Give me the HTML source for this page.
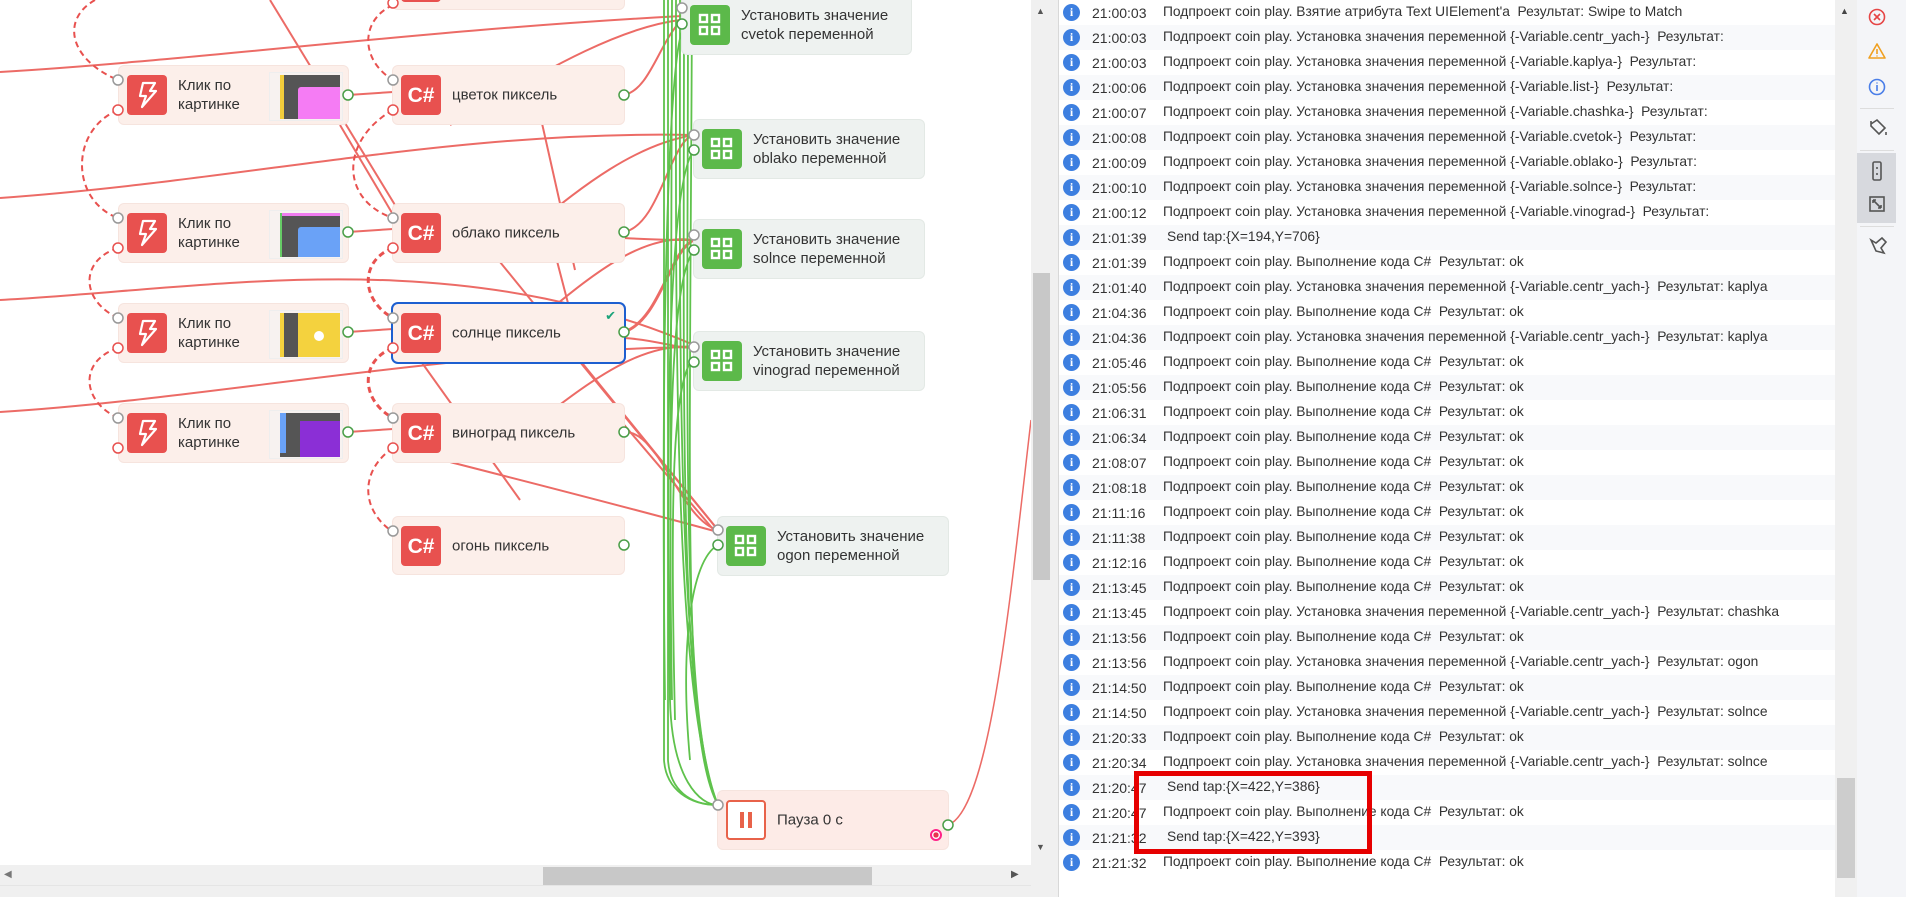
<!DOCTYPE html>
<html><head><meta charset="utf-8">
<style>
*{margin:0;padding:0;box-sizing:border-box}
body{width:1906px;height:897px;overflow:hidden;background:#fff;font-family:"Liberation Sans","DejaVu Sans",sans-serif;position:relative}
.canvas{position:absolute;left:0;top:0;width:1031px;height:865px;background:#fff;overflow:hidden}
.node{position:absolute;border-radius:5px;font-size:15px;color:#333;line-height:19px}
.red{background:#fcefea;box-shadow:0 0 0 1px #f6e4de}
.grn{background:#eef2f0;box-shadow:0 0 0 1px #e3e9e5}
.ic{position:absolute;left:8px;top:9px;width:40px;height:40px;border-radius:4px;background:#e8514f;color:#fff;font-weight:bold;font-size:21px;display:flex;align-items:center;justify-content:center}
.gic{background:#5cb94a}
.lbl{position:absolute;left:59px;top:50%;transform:translateY(-50%)}
.thumb{position:absolute;left:150px;top:6px;width:74px;height:49px;background:#f7f2f0;border:1px solid #eee}
.log{position:absolute;left:1058px;top:0;width:777px;height:897px;background:#fff;border-left:1px solid #d8d8d8;overflow:hidden}
.row{position:absolute;left:0;width:777px;height:25px;font-size:13.8px;color:#333;white-space:nowrap}
.row:nth-child(odd){background:#fff}.row:nth-child(even){background:#f8f9fb}
.row .i{position:absolute;left:4px;top:4px;width:17px;height:17px;border-radius:50%;background:#3d7fe0;color:#fff;font-size:12px;font-weight:bold;text-align:center;line-height:17px;font-family:"Liberation Serif",serif}
.row .t{position:absolute;left:33px;top:5px;font-size:14px}
.row .m{position:absolute;left:104px;top:4px}
.row .s{left:108px}
</style></head><body>
<div class="canvas">
<svg width="1031" height="865" style="position:absolute;left:0;top:0" fill="none">
<g stroke="#ec6b66" stroke-width="2">
<path d="M0 72 C200 60 420 30 682 16"/>
<path d="M0 198 C250 180 450 130 694 135"/>
<path d="M0 300 C200 290 450 240 694 345"/>
<path d="M0 412 C200 400 450 350 694 347"/>
<path d="M270 0 L395 205"/>
<path d="M340 125 L395 218"/>
<path d="M530 70 L575 270"/>
<path d="M545 215 L575 330"/>
<path d="M450 125 C500 100 600 30 680 20"/>
<path d="M480 262 C520 250 600 150 694 135"/>
<path d="M480 362 C550 320 620 230 694 240"/>
<path d="M480 462 C550 420 620 340 694 347"/>
<path d="M500 262 L718 530"/>
<path d="M580 362 L718 530"/>
<path d="M620 420 L718 535"/>
<path d="M420 360 L520 500"/>
<path d="M450 462 C520 480 600 500 718 532"/>
<path d="M624 95 C650 90 660 40 682 20"/>
<path d="M624 232 C660 225 670 140 694 135"/>
<path d="M624 238 C660 240 680 240 694 240"/>
<path d="M624 332 C660 320 670 250 694 240" stroke-width="3"/>
<path d="M624 338 C660 340 680 350 694 347"/>
<path d="M624 432 C660 430 680 520 718 530"/>
<path d="M348 95 L393 92"/><path d="M348 232 L393 229"/><path d="M348 332 L393 329"/><path d="M348 432 L393 429"/>
<path d="M948 825 C990 810 1010 600 1031 420" stroke-width="1.5"/>
</g>
<g stroke="#e8514f" stroke-width="2" stroke-dasharray="6 4">
<path d="M118 110 C70 130 70 200 118 218"/>
<path d="M118 248 C80 260 80 300 118 318"/>
<path d="M118 348 C80 360 80 400 118 418"/>
<path d="M95 0 C60 20 70 60 118 80"/>
<path d="M393 5 C360 20 360 60 393 80"/>
<path d="M393 110 C340 140 340 200 393 218"/>
<path d="M393 248 C360 260 360 300 393 318" stroke-width="3"/>
<path d="M393 348 C360 360 360 400 393 418" stroke-width="3"/>
<path d="M393 448 C360 470 360 510 393 532"/>
</g>
<g stroke="#5fc24c" stroke-width="1.8">
<path d="M664 0 L664 760 C666 790 690 805 718 805"/>
<path d="M668 0 L668 760 C670 790 690 805 718 805"/>
<path d="M672 0 L670 700 C672 780 700 805 718 805"/>
<path d="M676 0 C676 300 672 700 718 805"/>
<path d="M680 0 C680 300 675 700 718 805"/>
<path d="M684 0 C684 400 678 720 718 805"/>
<path d="M688 0 C688 400 680 720 718 805"/>
<path d="M692 0 C690 500 682 740 718 805"/>
<path d="M682 32 C670 60 660 300 665 700"/>
<path d="M694 150 C670 180 665 400 670 700"/>
<path d="M694 250 C670 280 668 450 672 700"/>
<path d="M694 357 C672 380 670 500 675 720"/>
<path d="M718 545 C690 560 680 650 690 760"/>
</g>
</svg>

<div class="node red" style="left:393px;top:-48px;width:231px;height:57px"><div class="ic" style="top:30px;height:20px"></div></div>

<div class="node red" style="left:119px;top:66px;width:229px;height:58px"><div class="ic"><svg width="24" height="28" viewBox="0 0 24 28"><path d="M8 2h12l-5 8h6L7 26l4-11H5z" stroke="#fff" stroke-width="2.2" fill="none" stroke-linejoin="round"/></svg></div><div class="lbl">Клик по<br>картинке</div><div class="thumb"><div style="position:absolute;left:10px;top:2px;width:60px;height:44px;background:#555"></div><div style="position:absolute;left:10px;top:2px;width:4px;height:44px;background:#f2cd3b"></div><div style="position:absolute;left:28px;top:14px;width:42px;height:32px;background:#f57cf4;border-radius:3px 0 0 0"></div></div></div>
<div class="node red" style="left:119px;top:204px;width:229px;height:58px"><div class="ic"><svg width="24" height="28" viewBox="0 0 24 28"><path d="M8 2h12l-5 8h6L7 26l4-11H5z" stroke="#fff" stroke-width="2.2" fill="none" stroke-linejoin="round"/></svg></div><div class="lbl">Клик по<br>картинке</div><div class="thumb"><div style="position:absolute;left:10px;top:2px;width:60px;height:44px;background:#555"></div><div style="position:absolute;left:10px;top:2px;width:60px;height:3px;background:#f07cf0"></div><div style="position:absolute;left:10px;top:2px;width:2px;height:44px;background:#6c6"></div><div style="position:absolute;left:28px;top:16px;width:42px;height:30px;background:#6aa2f7;border-radius:3px 0 0 0"></div></div></div>
<div class="node red" style="left:119px;top:304px;width:229px;height:58px"><div class="ic"><svg width="24" height="28" viewBox="0 0 24 28"><path d="M8 2h12l-5 8h6L7 26l4-11H5z" stroke="#fff" stroke-width="2.2" fill="none" stroke-linejoin="round"/></svg></div><div class="lbl">Клик по<br>картинке</div><div class="thumb"><div style="position:absolute;left:10px;top:2px;width:60px;height:44px;background:#f4d23e"></div><div style="position:absolute;left:14px;top:2px;width:14px;height:44px;background:#555"></div><div style="position:absolute;left:44px;top:20px;width:10px;height:10px;background:#fff;border-radius:50%"></div></div></div>
<div class="node red" style="left:119px;top:404px;width:229px;height:58px"><div class="ic"><svg width="24" height="28" viewBox="0 0 24 28"><path d="M8 2h12l-5 8h6L7 26l4-11H5z" stroke="#fff" stroke-width="2.2" fill="none" stroke-linejoin="round"/></svg></div><div class="lbl">Клик по<br>картинке</div><div class="thumb"><div style="position:absolute;left:10px;top:2px;width:60px;height:44px;background:#555"></div><div style="position:absolute;left:10px;top:2px;width:6px;height:40px;background:#6aa2f7"></div><div style="position:absolute;left:30px;top:10px;width:40px;height:36px;background:#8b2fd6"></div></div></div>

<div class="node red" style="left:393px;top:66px;width:231px;height:58px"><div class="ic">C#</div><div class="lbl">цветок пиксель</div></div>
<div class="node red" style="left:393px;top:204px;width:231px;height:58px"><div class="ic">C#</div><div class="lbl">облако пиксель</div></div>
<div class="node red" style="left:393px;top:304px;width:231px;height:58px;box-shadow:0 0 0 2px #1d5fd0;background:#fcefea"><div class="ic">C#</div><div class="lbl">солнце пиксель</div><div style="position:absolute;right:8px;top:2px;color:#1aa37a;font-size:13px;font-weight:bold">✔</div></div>
<div class="node red" style="left:393px;top:404px;width:231px;height:58px"><div class="ic">C#</div><div class="lbl">виноград пиксель</div></div>
<div class="node red" style="left:393px;top:517px;width:231px;height:57px"><div class="ic">C#</div><div class="lbl">огонь пиксель</div></div>

<div class="node grn" style="left:682px;top:-4px;width:229px;height:58px"><div class="ic gic"><svg width="24" height="24"><g stroke="#fff" stroke-width="2.4" fill="none"><rect x="2" y="2" width="7" height="7"/><rect x="14" y="2" width="7" height="7"/><rect x="2" y="14" width="7" height="7"/><rect x="14" y="14" width="7" height="7"/></g></svg></div><div class="lbl">Установить значение<br>cvetok переменной</div></div>
<div class="node grn" style="left:694px;top:120px;width:230px;height:58px"><div class="ic gic"><svg width="24" height="24"><g stroke="#fff" stroke-width="2.4" fill="none"><rect x="2" y="2" width="7" height="7"/><rect x="14" y="2" width="7" height="7"/><rect x="2" y="14" width="7" height="7"/><rect x="14" y="14" width="7" height="7"/></g></svg></div><div class="lbl">Установить значение<br>oblako переменной</div></div>
<div class="node grn" style="left:694px;top:220px;width:230px;height:58px"><div class="ic gic"><svg width="24" height="24"><g stroke="#fff" stroke-width="2.4" fill="none"><rect x="2" y="2" width="7" height="7"/><rect x="14" y="2" width="7" height="7"/><rect x="2" y="14" width="7" height="7"/><rect x="14" y="14" width="7" height="7"/></g></svg></div><div class="lbl">Установить значение<br>solnce переменной</div></div>
<div class="node grn" style="left:694px;top:332px;width:230px;height:58px"><div class="ic gic"><svg width="24" height="24"><g stroke="#fff" stroke-width="2.4" fill="none"><rect x="2" y="2" width="7" height="7"/><rect x="14" y="2" width="7" height="7"/><rect x="2" y="14" width="7" height="7"/><rect x="14" y="14" width="7" height="7"/></g></svg></div><div class="lbl">Установить значение<br>vinograd переменной</div></div>
<div class="node grn" style="left:718px;top:517px;width:230px;height:58px"><div class="ic gic"><svg width="24" height="24"><g stroke="#fff" stroke-width="2.4" fill="none"><rect x="2" y="2" width="7" height="7"/><rect x="14" y="2" width="7" height="7"/><rect x="2" y="14" width="7" height="7"/><rect x="14" y="14" width="7" height="7"/></g></svg></div><div class="lbl">Установить значение<br>ogon переменной</div></div>
<div class="node red" style="left:718px;top:791px;width:230px;height:58px;background:#fdebe7"><div class="ic" style="background:#fff;border:2.5px solid #e8624a"><div style="width:4px;height:16px;background:#e8624a;margin-right:4px"></div><div style="width:4px;height:16px;background:#e8624a"></div></div><div class="lbl">Пауза 0 с</div><div style="position:absolute;right:6px;bottom:8px;width:12px;height:12px;border-radius:50%;border:2px solid #f28;background:radial-gradient(#e83350 45%,#fff 50%)"></div></div>

<svg width="1031" height="865" style="position:absolute;left:0;top:0" fill="#fff" stroke-width="1.5">
<g stroke="#999"><circle cx="118" cy="80" r="5"/><circle cx="118" cy="218" r="5"/><circle cx="118" cy="318" r="5"/><circle cx="118" cy="418" r="5"/>
<circle cx="393" cy="80" r="5"/><circle cx="393" cy="218" r="5"/><circle cx="393" cy="318" r="5"/><circle cx="393" cy="418" r="5"/><circle cx="393" cy="531" r="5"/>
<circle cx="682" cy="8" r="5"/><circle cx="694" cy="135" r="5"/><circle cx="694" cy="235" r="5"/><circle cx="694" cy="347" r="5"/><circle cx="718" cy="530" r="5"/><circle cx="718" cy="805" r="5"/></g>
<g stroke="#e8514f"><circle cx="118" cy="110" r="5"/><circle cx="118" cy="248" r="5"/><circle cx="118" cy="348" r="5"/><circle cx="118" cy="448" r="5"/>
<circle cx="393" cy="3" r="5"/><circle cx="393" cy="110" r="5"/><circle cx="393" cy="248" r="5"/><circle cx="393" cy="348" r="5"/><circle cx="393" cy="448" r="5"/></g>
<g stroke="#4a9e48"><circle cx="348" cy="95" r="5"/><circle cx="348" cy="232" r="5"/><circle cx="348" cy="332" r="5"/><circle cx="348" cy="432" r="5"/>
<circle cx="624" cy="95" r="5"/><circle cx="624" cy="232" r="5"/><circle cx="624" cy="332" r="5"/><circle cx="624" cy="432" r="5"/><circle cx="624" cy="545" r="5"/>
<circle cx="682" cy="24" r="5"/><circle cx="694" cy="150" r="5"/><circle cx="694" cy="250" r="5"/><circle cx="694" cy="362" r="5"/><circle cx="718" cy="545" r="5"/><circle cx="948" cy="825" r="5"/></g>
</svg>
</div>
<div style="position:absolute;left:1031px;top:0;width:21px;height:865px;background:#f0f0f0"><div style="position:absolute;left:2px;top:273px;width:17px;height:307px;background:#c8c8c8"></div><div style="position:absolute;left:5px;top:842px;font-size:9px;color:#555">▼</div><div style="position:absolute;left:5px;top:6px;font-size:9px;color:#555">▲</div></div>
<div style="position:absolute;left:0;top:865px;width:1052px;height:32px;background:#f0f0f0"><div style="position:absolute;left:543px;top:2px;width:329px;height:19px;background:#c8c8c8"></div><div style="position:absolute;left:0;top:0;width:1031px;height:21px;border-bottom:1px solid #e5e5e5"></div><div style="position:absolute;left:4px;top:4px;font-size:10px;color:#777">◀</div><div style="position:absolute;left:1011px;top:4px;font-size:10px;color:#555">▶</div></div>
<div style="position:absolute;left:1052px;top:0;width:6px;height:897px;background:#f0f0f0"></div>

<div class="log">
<div class="row" style="top:0"><span class="i">i</span><span class="t">21:00:03</span><span class="m">Подпроект coin play. Взятие атрибута Text UIElement'a &nbsp;Результат: Swipe to Match</span></div>
<div class="row" style="top:25px"><span class="i">i</span><span class="t">21:00:03</span><span class="m">Подпроект coin play. Установка значения переменной {-Variable.centr_yach-} &nbsp;Результат:</span></div>
<div class="row" style="top:50px"><span class="i">i</span><span class="t">21:00:03</span><span class="m">Подпроект coin play. Установка значения переменной {-Variable.kaplya-} &nbsp;Результат:</span></div>
<div class="row" style="top:75px"><span class="i">i</span><span class="t">21:00:06</span><span class="m">Подпроект coin play. Установка значения переменной {-Variable.list-} &nbsp;Результат:</span></div>
<div class="row" style="top:100px"><span class="i">i</span><span class="t">21:00:07</span><span class="m">Подпроект coin play. Установка значения переменной {-Variable.chashka-} &nbsp;Результат:</span></div>
<div class="row" style="top:125px"><span class="i">i</span><span class="t">21:00:08</span><span class="m">Подпроект coin play. Установка значения переменной {-Variable.cvetok-} &nbsp;Результат:</span></div>
<div class="row" style="top:150px"><span class="i">i</span><span class="t">21:00:09</span><span class="m">Подпроект coin play. Установка значения переменной {-Variable.oblako-} &nbsp;Результат:</span></div>
<div class="row" style="top:175px"><span class="i">i</span><span class="t">21:00:10</span><span class="m">Подпроект coin play. Установка значения переменной {-Variable.solnce-} &nbsp;Результат:</span></div>
<div class="row" style="top:200px"><span class="i">i</span><span class="t">21:00:12</span><span class="m">Подпроект coin play. Установка значения переменной {-Variable.vinograd-} &nbsp;Результат:</span></div>
<div class="row" style="top:225px"><span class="i">i</span><span class="t">21:01:39</span><span class="m s">Send tap:{X=194,Y=706}</span></div>
<div class="row" style="top:250px"><span class="i">i</span><span class="t">21:01:39</span><span class="m">Подпроект coin play. Выполнение кода C# &nbsp;Результат: ok</span></div>
<div class="row" style="top:275px"><span class="i">i</span><span class="t">21:01:40</span><span class="m">Подпроект coin play. Установка значения переменной {-Variable.centr_yach-} &nbsp;Результат: kaplya</span></div>
<div class="row" style="top:300px"><span class="i">i</span><span class="t">21:04:36</span><span class="m">Подпроект coin play. Выполнение кода C# &nbsp;Результат: ok</span></div>
<div class="row" style="top:325px"><span class="i">i</span><span class="t">21:04:36</span><span class="m">Подпроект coin play. Установка значения переменной {-Variable.centr_yach-} &nbsp;Результат: kaplya</span></div>
<div class="row" style="top:350px"><span class="i">i</span><span class="t">21:05:46</span><span class="m">Подпроект coin play. Выполнение кода C# &nbsp;Результат: ok</span></div>
<div class="row" style="top:375px"><span class="i">i</span><span class="t">21:05:56</span><span class="m">Подпроект coin play. Выполнение кода C# &nbsp;Результат: ok</span></div>
<div class="row" style="top:400px"><span class="i">i</span><span class="t">21:06:31</span><span class="m">Подпроект coin play. Выполнение кода C# &nbsp;Результат: ok</span></div>
<div class="row" style="top:425px"><span class="i">i</span><span class="t">21:06:34</span><span class="m">Подпроект coin play. Выполнение кода C# &nbsp;Результат: ok</span></div>
<div class="row" style="top:450px"><span class="i">i</span><span class="t">21:08:07</span><span class="m">Подпроект coin play. Выполнение кода C# &nbsp;Результат: ok</span></div>
<div class="row" style="top:475px"><span class="i">i</span><span class="t">21:08:18</span><span class="m">Подпроект coin play. Выполнение кода C# &nbsp;Результат: ok</span></div>
<div class="row" style="top:500px"><span class="i">i</span><span class="t">21:11:16</span><span class="m">Подпроект coin play. Выполнение кода C# &nbsp;Результат: ok</span></div>
<div class="row" style="top:525px"><span class="i">i</span><span class="t">21:11:38</span><span class="m">Подпроект coin play. Выполнение кода C# &nbsp;Результат: ok</span></div>
<div class="row" style="top:550px"><span class="i">i</span><span class="t">21:12:16</span><span class="m">Подпроект coin play. Выполнение кода C# &nbsp;Результат: ok</span></div>
<div class="row" style="top:575px"><span class="i">i</span><span class="t">21:13:45</span><span class="m">Подпроект coin play. Выполнение кода C# &nbsp;Результат: ok</span></div>
<div class="row" style="top:600px"><span class="i">i</span><span class="t">21:13:45</span><span class="m">Подпроект coin play. Установка значения переменной {-Variable.centr_yach-} &nbsp;Результат: chashka</span></div>
<div class="row" style="top:625px"><span class="i">i</span><span class="t">21:13:56</span><span class="m">Подпроект coin play. Выполнение кода C# &nbsp;Результат: ok</span></div>
<div class="row" style="top:650px"><span class="i">i</span><span class="t">21:13:56</span><span class="m">Подпроект coin play. Установка значения переменной {-Variable.centr_yach-} &nbsp;Результат: ogon</span></div>
<div class="row" style="top:675px"><span class="i">i</span><span class="t">21:14:50</span><span class="m">Подпроект coin play. Выполнение кода C# &nbsp;Результат: ok</span></div>
<div class="row" style="top:700px"><span class="i">i</span><span class="t">21:14:50</span><span class="m">Подпроект coin play. Установка значения переменной {-Variable.centr_yach-} &nbsp;Результат: solnce</span></div>
<div class="row" style="top:725px"><span class="i">i</span><span class="t">21:20:33</span><span class="m">Подпроект coin play. Выполнение кода C# &nbsp;Результат: ok</span></div>
<div class="row" style="top:750px"><span class="i">i</span><span class="t">21:20:34</span><span class="m">Подпроект coin play. Установка значения переменной {-Variable.centr_yach-} &nbsp;Результат: solnce</span></div>
<div class="row" style="top:775px"><span class="i">i</span><span class="t">21:20:47</span><span class="m s">Send tap:{X=422,Y=386}</span></div>
<div class="row" style="top:800px"><span class="i">i</span><span class="t">21:20:47</span><span class="m">Подпроект coin play. Выполнение кода C# &nbsp;Результат: ok</span></div>
<div class="row" style="top:825px"><span class="i">i</span><span class="t">21:21:32</span><span class="m s">Send tap:{X=422,Y=393}</span></div>
<div class="row" style="top:850px"><span class="i">i</span><span class="t">21:21:32</span><span class="m">Подпроект coin play. Выполнение кода C# &nbsp;Результат: ok</span></div>
</div>
<div style="position:absolute;left:1134px;top:771px;width:238px;height:83px;border:5px solid #e60000"></div>

<div style="position:absolute;left:1835px;top:0;width:22px;height:897px;background:#f0f0f0"><div style="position:absolute;left:5px;top:6px;font-size:9px;color:#444">▲</div><div style="position:absolute;left:2px;top:778px;width:18px;height:100px;background:#cdcdcd"></div></div>
<div style="position:absolute;left:1857px;top:0;width:49px;height:897px;background:#f4f5f8">
<div style="position:absolute;left:0;top:153px;width:39px;height:70px;background:#d7d9de"></div>
<div style="position:absolute;left:3px;top:108px;width:34px;height:1px;background:#ddd"></div>
<div style="position:absolute;left:3px;top:150px;width:34px;height:1px;background:#ddd"></div>
<div style="position:absolute;left:3px;top:226px;width:34px;height:1px;background:#ddd"></div>
<svg width="40" height="270" style="position:absolute;left:0;top:0" fill="none" stroke-width="1.6">
<circle cx="20" cy="17" r="7.5" stroke="#e64545"/><path d="M17 14l6 6M23 14l-6 6" stroke="#e64545"/>
<path d="M20 44l8 14H12z" stroke="#f0a020" stroke-linejoin="round"/><path d="M20 49v5M20 55.5v1" stroke="#f0a020"/>
<circle cx="20" cy="87" r="7.5" stroke="#4a7ee8"/><path d="M20 85v6M20 82.5v1" stroke="#4a7ee8"/>
<path d="M14 124l6-4 8 8-6 6-8-8z M14 124v-3" stroke="#555"/><path d="M29 132v3" stroke="#555"/>
<rect x="16" y="162" width="8" height="18" rx="1.5" stroke="#555"/><path d="M20 167v2M20 173v2" stroke="#555"/>
<rect x="13" y="197" width="14" height="14" stroke="#555"/><path d="M16 200l8 8M16 200h3M16 200v3M24 208h-3M24 208v-3" stroke="#555"/>
<path d="M14 240l5 3 6-5 4 4-5 6 3 5-8-2-5-11z" stroke="#555"/>
</svg>
</div>
</body></html>
